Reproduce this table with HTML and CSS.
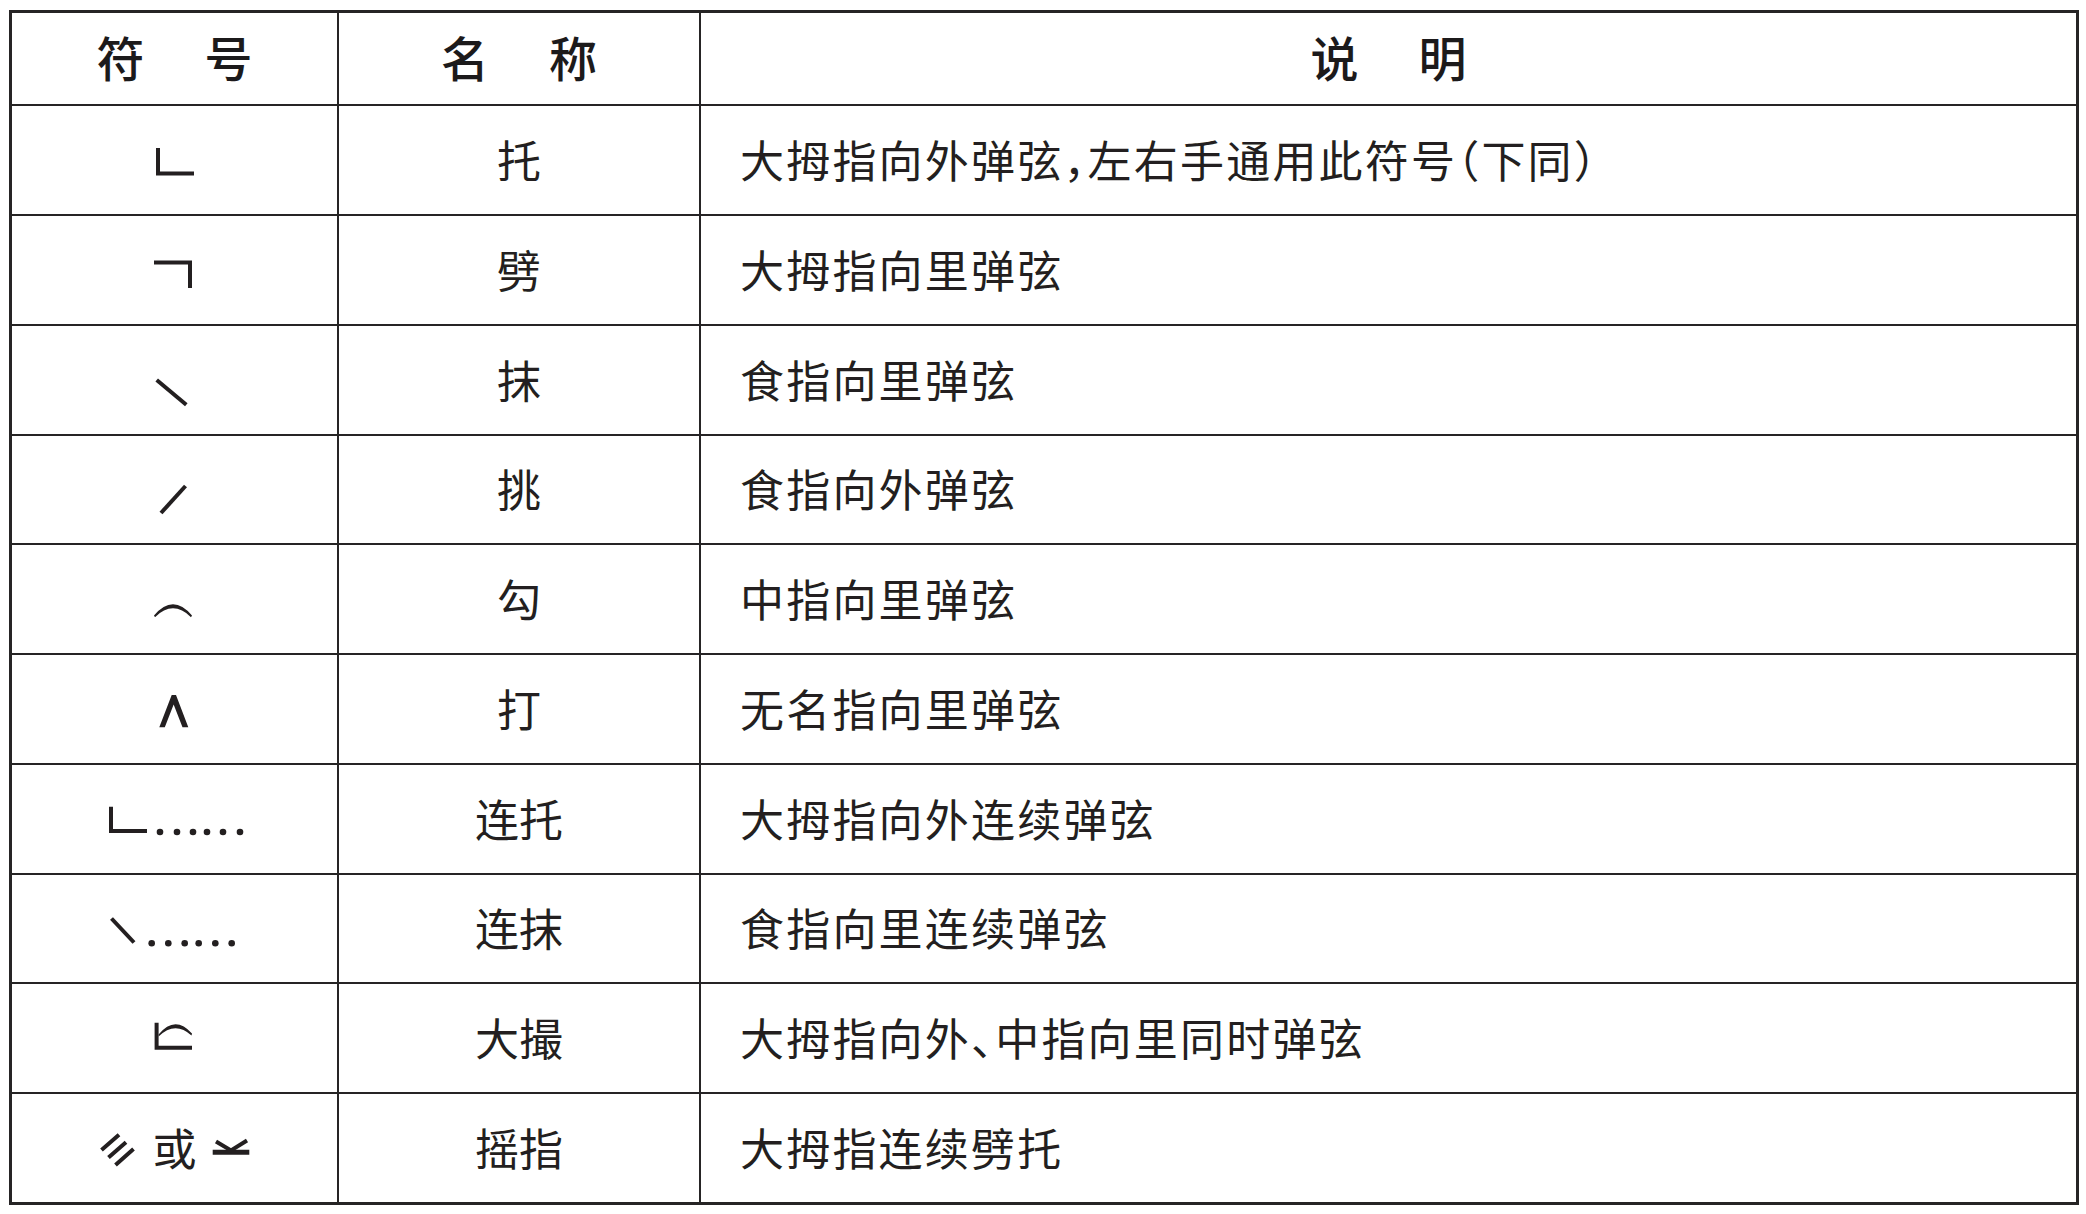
FILE: index.html
```html
<!DOCTYPE html>
<html lang="zh-CN">
<head>
<meta charset="utf-8">
<title>指法符号</title>
<link rel="stylesheet" href="styles.css">
</head>
<body>
<div class="table">
  <div class="cell head"><span>符</span><span>号</span></div>
  <div class="cell head"><span>名</span><span>称</span></div>
  <div class="cell head"><span>说</span><span>明</span></div>

  <div class="cell sym"><svg class="glyph" viewBox="0 0 200 60"><path class="ln" d="M83 18V43.5H119"/></svg></div>
  <div class="cell name">托</div>
  <div class="cell desc">大拇指向外弹弦<span class="punct">，</span>左右手通用此符号<span class="punct">（</span>下同<span class="punct">）</span></div>

  <div class="cell sym"><svg class="glyph" viewBox="0 0 200 60"><path class="ln" d="M79 22.5H115V48"/></svg></div>
  <div class="cell name">劈</div>
  <div class="cell desc">大拇指向里弹弦</div>

  <div class="cell sym"><svg class="glyph" viewBox="0 0 200 60"><path class="ln" d="M81.7 30L111.3 54.7"/></svg></div>
  <div class="cell name">抹</div>
  <div class="cell desc">食指向里弹弦</div>

  <div class="cell sym"><svg class="glyph" viewBox="0 0 200 60"><path class="ln" d="M110.5 26L86 53"/></svg></div>
  <div class="cell name">挑</div>
  <div class="cell desc">食指向外弹弦</div>

  <div class="cell sym"><svg class="glyph" viewBox="0 0 200 60"><path class="fl" d="M79 46.5Q98 24 117 46.5L116 48.2Q98 30.5 80 48.2Z"/></svg></div>
  <div class="cell name">勾</div>
  <div class="cell desc">中指向里弹弦</div>

  <div class="cell sym"><svg class="glyph" viewBox="0 0 200 60"><polygon class="fl" points="84.3,48.3 96.7,16 101,16 113.3,48.3 107.5,48.3 98.65,25.5 89.8,48.3"/></svg></div>
  <div class="cell name">打</div>
  <div class="cell desc">无名指向里弹弦</div>

  <div class="cell sym"><svg class="glyph" viewBox="0 0 200 60"><path class="ln" d="M36 17.7V42H72"/><g class="fl"><circle cx="85" cy="43" r="3.3"/><circle cx="102" cy="43" r="3.3"/><circle cx="118" cy="43" r="3.3"/><circle cx="132" cy="43" r="3.3"/><circle cx="148" cy="43" r="3.3"/><circle cx="165" cy="43" r="3.3"/></g></svg></div>
  <div class="cell name">连托</div>
  <div class="cell desc">大拇指向外连续弹弦</div>

  <div class="cell sym"><svg class="glyph" viewBox="0 0 200 60"><path class="ln" d="M36.5 19.5L59 43.5"/><g class="fl"><circle cx="76.7" cy="44.2" r="3.3"/><circle cx="93.3" cy="44.2" r="3.3"/><circle cx="109.7" cy="44.2" r="3.3"/><circle cx="123.7" cy="44.2" r="3.3"/><circle cx="140.3" cy="44.2" r="3.3"/><circle cx="156.7" cy="44.2" r="3.3"/></g></svg></div>
  <div class="cell name">连抹</div>
  <div class="cell desc">食指向里连续弹弦</div>

  <div class="cell sym"><svg class="glyph" viewBox="0 0 200 60"><path class="ln" d="M81.6 14.7V39.7H117"/><path class="fl" d="M83.6 26.5Q100 6.5 117 25.5L116.5 27.5Q100 12.5 83.6 28.5Z"/></svg></div>
  <div class="cell name">大撮</div>
  <div class="cell desc">大拇指向外<span class="punct">、</span>中指向里同时弹弦</div>

  <div class="cell sym combo">
    <svg class="mini" viewBox="0 0 40 50"><path class="ln" d="M3.5 27L21 11.75M10.5 34.5L28 19.25M17.5 42L35.5 26"/></svg>
    <span class="or">或</span>
    <svg class="mini" viewBox="0 0 40 50"><rect class="fl" x="0.7" y="26.75" width="36.6" height="5"/><path class="ln" d="M4 18.5L19 27.5L35 17.5"/></svg>
  </div>
  <div class="cell name">摇指</div>
  <div class="cell desc">大拇指连续劈托</div>
</div>
</body>
</html>
```

FILE: styles.css
```css
html, body {
  margin: 0;
  background: #ffffff;
}

body {
  font-family: "Noto Sans CJK SC", "Noto Sans", sans-serif;
  color: #231f20;
}

.table {
  display: grid;
  width: max-content;
  margin: 10px 0 0 9px;
  border: 3px solid #262425;
  background: #262425;
  grid-template-columns: 325px 360px 1375px;
  grid-template-rows: 91px 108px 108px 108px 107px 108px 108px 108px 107px 108px 108px;
  column-gap: 2px;
  row-gap: 2px;
}

.cell {
  background: #ffffff;
  display: flex;
  align-items: center;
  justify-content: center;
  line-height: 1;
}

.head {
  font-size: 48px;
  font-weight: 500;
  gap: 60px;
  padding-bottom: 5px;
  color: #1c1a1b;
}

.name {
  font-size: 44px;
  font-weight: 400;
  padding-bottom: 3px;
}

.desc {
  justify-content: flex-start;
  padding-left: 39px;
  padding-bottom: 3px;
  font-size: 44px;
  font-weight: 400;
  letter-spacing: 2.2px;
  white-space: pre;
}

.punct {
  font-feature-settings: "halt" 1;
}

.glyph {
  width: 200px;
  height: 60px;
  display: block;
}

.mini {
  width: 40px;
  height: 50px;
  display: block;
}

.combo {
  gap: 15px;
}

.or {
  font-size: 44px;
  font-weight: 400;
  padding-bottom: 3px;
}

.ln {
  fill: none;
  stroke: #231f20;
  stroke-width: 4;
  stroke-linecap: butt;
  stroke-linejoin: miter;
}

.fl {
  fill: #231f20;
}
```
